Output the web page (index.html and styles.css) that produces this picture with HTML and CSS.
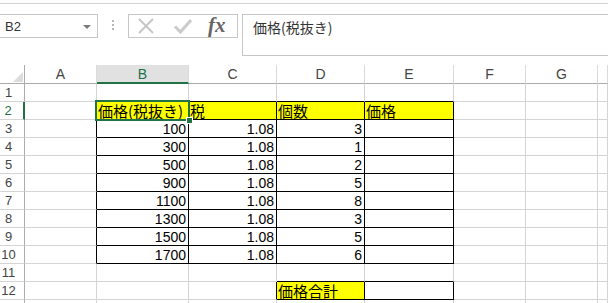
FILE: index.html
```html
<!DOCTYPE html>
<html lang="ja">
<head>
<meta charset="utf-8">
<title>Excel</title>
<link rel="stylesheet" href="styles.css">
</head>
<body>
<div class="topline"></div>
<div class="fbar">
  <div class="namebox"><span>B2</span><i class="caret"></i></div>
  <div class="sep"></div>
  <div class="fbtns">
    <svg class="ico-x" width="18" height="18" viewBox="0 0 18 18"><path d="M2 2 L16 16 M16 2 L2 16" stroke="#c4c4c4" stroke-width="1.8" fill="none"/></svg>
    <svg class="ico-ok" width="20" height="18" viewBox="0 0 20 18"><path d="M2 9.5 L7.5 15 L18 3" stroke="#cacaca" stroke-width="3" fill="none"/></svg>
    <span class="fx">fx</span>
  </div>
  <div class="formula">価格(税抜き)</div>
</div>
<div class="sheet">
  <div class="corner"><i class="tri"></i></div>
  <div class="ch">A</div><div class="ch sel">B</div><div class="ch">C</div><div class="ch">D</div><div class="ch">E</div><div class="ch">F</div><div class="ch">G</div><div class="ch"></div>

  <div class="rh">1</div><div class="c"></div><div class="c bb"></div><div class="c bb"></div><div class="c bb"></div><div class="c bb"></div><div class="c"></div><div class="c"></div><div class="c"></div>

  <div class="rh sel">2</div><div class="c br"></div><div class="c t y jp active">価格(税抜き)<span class="selbox"><i class="handle"></i></span></div><div class="c t y jp">税</div><div class="c t y jp">個数</div><div class="c t y jp">価格</div><div class="c"></div><div class="c"></div><div class="c"></div>

  <div class="rh">3</div><div class="c br"></div><div class="c t n">100</div><div class="c t n">1.08</div><div class="c t n">3</div><div class="c t"></div><div class="c"></div><div class="c"></div><div class="c"></div>
  <div class="rh">4</div><div class="c br"></div><div class="c t n">300</div><div class="c t n">1.08</div><div class="c t n">1</div><div class="c t"></div><div class="c"></div><div class="c"></div><div class="c"></div>
  <div class="rh">5</div><div class="c br"></div><div class="c t n">500</div><div class="c t n">1.08</div><div class="c t n">2</div><div class="c t"></div><div class="c"></div><div class="c"></div><div class="c"></div>
  <div class="rh">6</div><div class="c br"></div><div class="c t n">900</div><div class="c t n">1.08</div><div class="c t n">5</div><div class="c t"></div><div class="c"></div><div class="c"></div><div class="c"></div>
  <div class="rh">7</div><div class="c br"></div><div class="c t n">1100</div><div class="c t n">1.08</div><div class="c t n">8</div><div class="c t"></div><div class="c"></div><div class="c"></div><div class="c"></div>
  <div class="rh">8</div><div class="c br"></div><div class="c t n">1300</div><div class="c t n">1.08</div><div class="c t n">3</div><div class="c t"></div><div class="c"></div><div class="c"></div><div class="c"></div>
  <div class="rh">9</div><div class="c br"></div><div class="c t n">1500</div><div class="c t n">1.08</div><div class="c t n">5</div><div class="c t"></div><div class="c"></div><div class="c"></div><div class="c"></div>
  <div class="rh">10</div><div class="c br"></div><div class="c t n">1700</div><div class="c t n">1.08</div><div class="c t n">6</div><div class="c t"></div><div class="c"></div><div class="c"></div><div class="c"></div>

  <div class="rh">11</div><div class="c"></div><div class="c"></div><div class="c"></div><div class="c bb"></div><div class="c bb"></div><div class="c"></div><div class="c"></div><div class="c"></div>
  <div class="rh">12</div><div class="c"></div><div class="c"></div><div class="c br"></div><div class="c t y jp">価格合計</div><div class="c t"></div><div class="c"></div><div class="c"></div><div class="c"></div>
  <div class="rh"></div><div class="c"></div><div class="c"></div><div class="c"></div><div class="c"></div><div class="c"></div><div class="c"></div><div class="c"></div><div class="c"></div>
</div>
</body>
</html>
```
FILE: styles.css
```css
* { box-sizing: border-box; }
html, body {
  margin: 0;
  padding: 0;
  background: #fff;
}
body {
  width: 608px;
  height: 303px;
  overflow: hidden;
  font-family: "Liberation Sans", "Noto Sans CJK JP", sans-serif;
  color: #000;
}
.topline {
  height: 4px;
  border-bottom: 1px solid #d4d4d4;
}
.fbar {
  display: flex;
  align-items: flex-start;
  height: 61px;
  padding-top: 10px;
}
.namebox {
  margin-left: -1px;
  width: 99px;
  height: 24px;
  border: 1px solid #c6c6c6;
  display: flex;
  align-items: center;
  justify-content: space-between;
  padding: 0 6px 0 5px;
  font-size: 13px;
  color: #333;
}
.caret {
  width: 0;
  height: 0;
  border-left: 4px solid transparent;
  border-right: 4px solid transparent;
  border-top: 4px solid #7a7a7a;
  margin-top: 1px;
}
.sep {
  margin: 6px 0 0 14px;
  width: 2px;
  height: 11px;
  background: repeating-linear-gradient(#b8b8b8 0 2px, transparent 2px 4px);
}
.fbtns {
  margin-left: 14px;
  width: 110px;
  height: 24px;
  border: 1px solid #c6c6c6;
  display: flex;
  align-items: center;
  padding-left: 8px;
}
.ico-ok { margin-left: 18px; }
.fx {
  margin-left: 15px;
  font-family: "Liberation Serif", serif;
  font-style: italic;
  font-weight: bold;
  font-size: 21px;
  color: #666;
  line-height: 20px;
  margin-top: -3px;
}
.formula {
  margin-left: 4px;
  flex: 1;
  margin-right: -10px;
  height: 42px;
  border: 1px solid #c6c6c6;
  padding: 2px 10px;
  font-family: "Noto Sans CJK JP", sans-serif;
  font-size: 14px;
  line-height: 20px;
  color: #333;
}
.sheet {
  display: grid;
  grid-template-columns: 25px 72px 92px 88px 88px 89px 72px 72px 1fr;
  grid-template-rows: 19px repeat(13, 18px);
}
.corner {
  border-right: 1px solid #ababab;
  border-bottom: 1px solid #ababab;
  display: flex;
  align-items: flex-end;
  justify-content: flex-end;
  padding: 0 1px 1px 0;
}
.tri {
  width: 0;
  height: 0;
  border-left: 10px solid transparent;
  border-bottom: 10px solid #dcdcdc;
}
.ch {
  border-right: 1px solid #dadada;
  border-bottom: 1px solid #ababab;
  text-align: center;
  font-size: 14px;
  line-height: 19px;
  color: #444;
}
.ch.sel {
  background: #e1e1e1;
  color: #217346;
  border-bottom: 2px solid #217346;
}
.rh {
  border-right: 1px solid #ababab;
  border-bottom: 1px solid #d4d4d4;
  font-size: 13px;
  line-height: 18px;
  color: #444;
  text-align: center;
  padding-right: 7px;
}
.rh.sel {
  color: #217346;
  border-right: 2px solid #217346;
}
.c {
  border-right: 1px solid #d4d4d4;
  border-bottom: 1px solid #d4d4d4;
  font-size: 14px;
  line-height: 16px;
  padding: 0 2px;
  display: flex;
  align-items: flex-end;
  white-space: nowrap;
}
.br { border-right-color: #000; }
.bb { border-bottom-color: #000; }
.t { border-right-color: #000; border-bottom-color: #000; }
.y { background: #ffff00; }
.n { justify-content: flex-end; }
.jp {
  font-family: "Noto Sans CJK JP", sans-serif;
  font-size: 15px;
  line-height: 17px;
  padding-left: 1px;
}
.active { position: relative; }
.selbox {
  position: absolute;
  left: -2px;
  top: -2px;
  width: 95px;
  height: 21px;
  border: 2px solid #217346;
}
.handle {
  position: absolute;
  right: -5px;
  bottom: -5px;
  width: 7px;
  height: 7px;
  background: #217346;
  border: 1px solid #fff;
}
```
